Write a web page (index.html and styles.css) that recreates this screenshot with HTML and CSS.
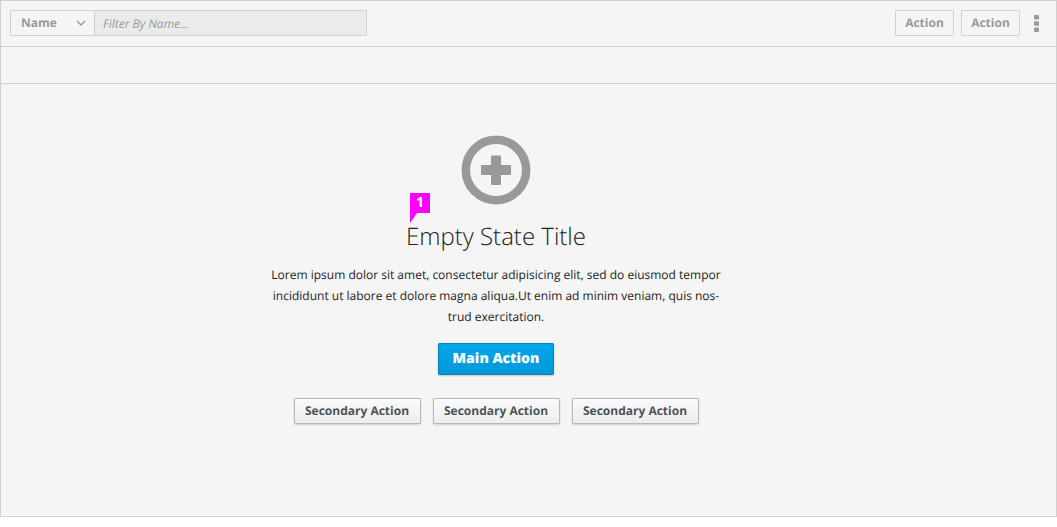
FILE: index.html
```html
<!DOCTYPE html>
<html lang="en">
<head>
<meta charset="utf-8">
<title>Empty State</title>
<link rel="stylesheet" href="styles.css">
</head>
<body>
<main class="panel">
  <header class="toolbar">
    <div class="filter">
      <div class="filter-type">
        <select class="filter-select" aria-label="Filter field">
          <option>Name</option>
        </select>
        <svg class="chevron" viewBox="0 0 10 6" aria-hidden="true"><path d="M1 1l4 4 4-4"/></svg>
      </div>
      <input class="filter-input" type="text" placeholder="Filter By Name..." aria-label="Filter by name">
    </div>
    <div class="actions">
      <button class="btn btn-flat" type="button">Action</button>
      <button class="btn btn-flat" type="button">Action</button>
      <button class="kebab" type="button" aria-label="More actions">
        <svg class="kebab-icon" viewBox="0 0 5 17" aria-hidden="true"><rect width="5" height="4.600" rx="1.2"/><rect y="6.200" width="5" height="4.600" rx="1.2"/><rect y="12.400" width="5" height="4.600" rx="1.2"/></svg>
      </button>
    </div>
  </header>
  <div class="subbar"></div>
  <section class="empty">
    <svg class="empty-icon" viewBox="0 0 70 70" aria-hidden="true"><circle cx="35" cy="35" r="30.2"/><path d="M31 20.500h8q1 0 1 1v8.500h9q1 0 1 1v8q0 1-1 1h-9v9q0 1-1 1h-8q-1 0-1-1v-9h-9q-1 0-1-1v-8q0-1 1-1h9v-8.500q0-1 1-1z"/></svg>
    <div class="title-wrap">
      <h1 class="title">Empty State Title</h1>
      <span class="marker">1</span>
    </div>
    <p class="text">Lorem ipsum dolor sit amet, consectetur adipisicing elit, sed do eiusmod tempor<br>incididunt ut labore et dolore magna aliqua.Ut enim ad minim veniam, quis nos-<br>trud exercitation.</p>
    <button class="btn btn-main" type="button">Main Action</button>
    <div class="secondary">
      <button class="btn btn-secondary" type="button">Secondary Action</button>
      <button class="btn btn-secondary" type="button">Secondary Action</button>
      <button class="btn btn-secondary" type="button">Secondary Action</button>
    </div>
  </section>
</main>
</body>
</html>
```
FILE: styles.css
```css
* { box-sizing: border-box; }

body {
  margin: 0;
  background: #fff;
  color: #222;
  font-family: "Open Sans", "Noto Sans", sans-serif;
  font-size: 12px;
  text-rendering: geometricPrecision;
}

button, select, input { text-rendering: inherit; }

.panel {
  background: #f5f5f5;
  border: 1px solid #d1d1d1;
}

.toolbar {
  display: flex;
  justify-content: space-between;
  align-items: center;
  padding: 9px 15px 10px 9px;
  border-bottom: 1px solid #d1d1d1;
}

.filter { display: flex; }

.filter-type { position: relative; }

.filter-select,
.filter-input {
  display: block;
  height: 26px;
  margin: 0;
  border: 1px solid #d1d1d1;
  font-family: inherit;
  font-size: 12px;
  outline: none;
}

.filter-select {
  width: 84px;
  padding: 0 10px 2px;
  appearance: none;
  border-right: 0;
  border-radius: 1px 0 0 1px;
  background: #f5f5f5;
  color: #999;
  font-weight: 700;
}

.chevron {
  position: absolute;
  top: 10px;
  right: 8px;
  width: 10px;
  height: 6px;
  fill: none;
  stroke: #999;
  stroke-width: 1.4;
  pointer-events: none;
}

.filter-input {
  width: 273px;
  padding: 0 8px;
  border-radius: 0 1px 1px 0;
  background: #ebebeb;
  color: #999;
  font-style: italic;
}

.filter-input::placeholder { color: #999; opacity: 1; }

.actions {
  display: flex;
  align-items: center;
  gap: 7px;
}

.btn {
  margin: 0;
  border-radius: 1px;
  font-family: inherit;
  font-size: 12px;
  font-weight: 700;
  line-height: 16px;
}

.btn-flat {
  min-width: 59px;
  height: 26px;
  padding: 0 8px 1px;
  border: 1px solid #d1d1d1;
  background: #f5f5f5;
  color: #999;
}

.kebab {
  display: flex;
  padding: 0 2px 0 7px;
  border: 0;
  background: none;
}

.kebab-icon {
  width: 5px;
  height: 17px;
  fill: #999;
}

.subbar {
  height: 37px;
  border-bottom: 1px solid #d1d1d1;
}

.empty {
  display: flex;
  flex-direction: column;
  align-items: center;
  padding: 51px 65px 92px 0;
}

.empty-icon {
  width: 70px;
  height: 70px;
}

.empty-icon circle { fill: none; stroke: #999; stroke-width: 8.5; }
.empty-icon path { fill: #999; }

.title-wrap {
  position: relative;
  margin-top: 16px;
}

.title {
  margin: 0;
  font-size: 24px;
  font-weight: 300;
  line-height: 32px;
}

.marker {
  position: absolute;
  top: -28px;
  left: 4px;
  width: 20px;
  height: 30px;
  background: #f0f;
  clip-path: polygon(0 0, 100% 0, 100% 20px, 7px 20px, 0 100%);
  color: #fff;
  font-size: 14px;
  font-weight: 700;
  line-height: 20px;
  text-align: center;
}

.text {
  margin: 11px 0 16px;
  line-height: 21px;
  text-align: center;
}

.btn-main {
  height: 32px;
  padding: 0 14px;
  border: 1px solid #0f7fad;
  background: linear-gradient(#00a8ec, #0098d6);
  box-shadow: 0 1px 2px rgba(0, 0, 0, 0.2);
  color: #fff;
  font-size: 14px;
  font-weight: 800;
}

.secondary {
  display: flex;
  gap: 12px;
  margin-top: 23px;
}

.btn-secondary {
  min-width: 127px;
  height: 26px;
  padding: 0 10px 1px;
  border: 1px solid #b7b7b7;
  background: linear-gradient(#fafafa, #ededed);
  box-shadow: 0 1px 2px rgba(0, 0, 0, 0.15);
  color: #4d5258;
}
```
